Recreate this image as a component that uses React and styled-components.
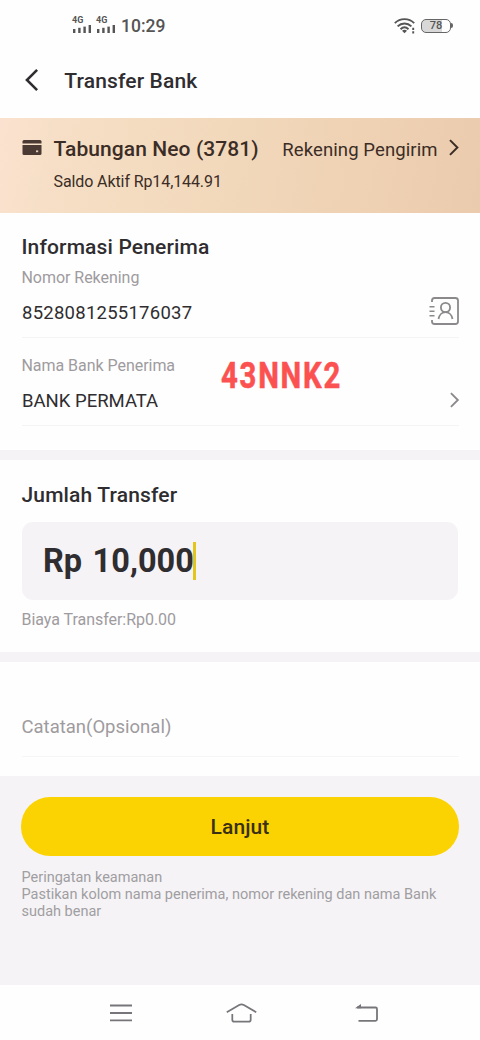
import React from 'react';
import styled, { createGlobalStyle } from 'styled-components';

const GlobalStyle = createGlobalStyle`
  * {
    box-sizing: border-box;
  }
  body {
    margin: 0;
    background-color: #fefefe;
    color: #2f2d30;
    font-family: Roboto, "Liberation Sans", sans-serif;
  }
  svg {
    display: block;
    flex: none;
    overflow: visible;
  }
`;

const Styles = {
  Screen: styled.div`
    display: flex;
    flex-direction: column;
    height: 1040px;
    overflow: hidden;
    position: relative;
    width: 480px;
  `,
  StatusBar: styled.div`
    align-items: center;
    color: #555;
    display: flex;
    height: 52px;
    justify-content: space-between;
    padding: 0 29px 0 72px;
  `,
  StatusGroup: styled.div`
    align-items: center;
    display: flex;
    gap: ${props => props.gap}px;
  `,
  Signal: styled.div`
    display: flex;
    flex-direction: column;
    font-size: 9px;
    font-weight: 700;
    line-height: 9px;
    margin-top: -3px;
    width: 20px;
  `,
  Clock: styled.span`
    font-size: 17.5px;
    font-weight: 500;
    line-height: 22px;
    margin-left: 1px;
  `,
  Battery: styled.div`
    align-items: center;
    background: linear-gradient(90deg, #d8d8d8 72%, #fefefe 72%);
    border: 1.5px solid #666;
    border-radius: 5px;
    display: flex;
    font-size: 11px;
    font-weight: 500;
    height: 14px;
    justify-content: center;
    line-height: 12px;
    position: relative;
    width: 30px;
    &::after {
      background-color: #666;
      border-radius: 0 2px 2px 0;
      content: '';
      height: 5px;
      position: absolute;
      right: -3px;
      top: 3px;
      width: 2px;
    }
  `,
  Header: styled.div`
    align-items: center;
    display: flex;
    height: 65.5px;
    padding: 0 22px 10px 24.5px;
    gap: 27px;
  `,
  PageTitle: styled.span`
    font-size: 21px;
    font-weight: 500;
    letter-spacing: .15px;
    line-height: 26px;
    padding-top: 2px;
  `,
  Account: styled.div`
    background: linear-gradient(100deg, #fbe2d0 0%, #f6dfc6 12%, #f2d9bc 45%, #efd1b3 75%, #ebcbad 100%);
    color: #3b2d26;
    height: 95px;
    padding: 16px 21px 0 22px;
  `,
  AccountRow: styled.div`
    align-items: center;
    display: flex;
    height: 30px;
    svg {
      margin-bottom: 3px;
    }
  `,
  AccountName: styled.span`
    flex: 1;
    font-size: 21px;
    font-weight: 500;
    letter-spacing: .08px;
    margin-left: 11.5px;
    white-space: nowrap;
  `,
  AccountRole: styled.span`
    font-size: 18.5px;
    letter-spacing: .1px;
    margin-right: 11.5px;
    padding-top: 3px;
    white-space: nowrap;
  `,
  Balance: styled.div`
    font-size: 16px;
    letter-spacing: -.1px;
    line-height: 20px;
    margin: 8px 0 0 31.5px;
  `,
  Section: styled.div`
    background-color: #fefefe;
    height: ${props => props.height}px;
    padding: ${props => props.top}px 21px 0 22px;
  `,
  Gap: styled.div`
    background-color: #f5f3f6;
    height: ${props => props.height}px;
  `,
  SectionTitle: styled.div`
    font-size: 21px;
    font-weight: 500;
    letter-spacing: .15px;
    line-height: 26px;
    margin-left: -.5px;
  `,
  Label: styled.div`
    color: #9e9b9f;
    font-size: 16px;
    letter-spacing: -.04px;
    line-height: 20px;
    margin-left: -.5px;
    margin-top: ${props => props.top}px;
  `,
  Field: styled.div`
    align-items: center;
    border-bottom: 1px solid #f4f4f5;
    display: flex;
    font-size: 18.5px;
    height: 50px;
    justify-content: space-between;
    letter-spacing: ${props => props.spacing || 0}px;
    svg {
      margin-bottom: ${props => props.lift || 0}px;
    }
  `,
  AmountBox: styled.div`
    align-items: center;
    background-color: #f5f3f6;
    border-radius: 11px;
    display: flex;
    font-size: 32.5px;
    font-weight: 700;
    height: 78px;
    margin-top: 14px;
    padding-left: 21px;
    width: 436px;
  `,
  Currency: styled.span`
    margin-right: 10.5px;
  `,
  Caret: styled.span`
    background-color: #e3c51b;
    height: 38px;
    margin-left: -1px;
    width: 3px;
  `,
  Note: styled.div`
    border-bottom: 1px solid #f6f6f7;
    color: #9e9b9f;
    font-size: 18.5px;
    height: 43px;
    line-height: 26px;
    margin-left: -.5px;
  `,
  Footer: styled.div`
    background-color: #f5f3f6;
    flex: 1;
    padding: 21px 21px 0;
  `,
  Submit: styled.button`
    background-color: #fbd303;
    border: 0;
    border-radius: 29px;
    color: #3a3012;
    display: block;
    font: 500 21px/26px Roboto, "Liberation Sans", sans-serif;
    height: 59px;
    letter-spacing: .1px;
    padding: 0;
    width: 438px;
  `,
  Warning: styled.div`
    color: #a09ea1;
    font-size: 14.5px;
    line-height: 17px;
    margin-top: 13px;
    padding-left: .5px;
    white-space: pre-line;
  `,
  NavBar: styled.div`
    align-items: center;
    display: flex;
    gap: 94px;
    height: 55px;
    padding: 1px 0 0 109.5px;
    svg:last-child {
      margin-left: 4px;
    }
  `,
  Stamp: styled.div`
    -webkit-text-stroke: .6px #fb5150;
    color: #fb5150;
    font-size: 37.5px;
    font-weight: 700;
    left: 220.5px;
    letter-spacing: 2.3px;
    line-height: 44px;
    position: absolute;
    top: 353px;
    transform: scaleX(.78);
    transform-origin: 0 50%;
  `
};

const SignalBars = () => (
  <Styles.Signal>
    4G
    <svg width="20" height="8" viewBox="0 0 20 8" fill="#555">
      <rect x="1" y="4" width="2.4" height="4" />
      <rect x="6.2" y="2.8" width="2.4" height="5.2" />
      <rect x="11.4" y="1.6" width="2.4" height="6.4" />
      <rect x="16.6" y="0" width="2.4" height="8" />
    </svg>
  </Styles.Signal>
);

const Wifi = () => (
  <svg width="22" height="16" viewBox="0 0 22 16" fill="none" stroke="#555" strokeWidth="1.9">
    <path d="M.8 5.2C6.2-.2 14.8-.2 20.2 5.2" />
    <path d="M3.6 8.4c3.9-3.8 9.9-3.8 13.8 0" />
    <path d="M6.5 11.2c2.4-2.2 5.6-2.2 8 0" />
    <path d="M8 12.7c1.5-1.4 3.5-1.4 5 0l-2.5 2.5z" fill="#555" stroke="none" />
    <path d="M19.2 9.8v2.2M19.2 13.2v2.2" />
  </svg>
);

const Chevron = ({ color, size = 17, left }) => (
  <svg width={size * .58} height={size} viewBox="0 0 10 17" fill="none" stroke={color} strokeWidth="2">
    <path d={left ? 'M9.5 .5 1.5 8.5 9.5 16.5' : 'M1 1l7.5 7.5L1 16'} />
  </svg>
);

const CardIcon = () => (
  <svg width="20" height="15" viewBox="0 0 20 15" fill="#4b3934">
    <path d="M2 0h16Q19.5 0 19.5 1.5V3.5H.5V1.5Q.5 0 2 0Z" />
    <path d="M.5 5h19v8.5q0 1.5-1.5 1.5H2Q.5 15 .5 13.5Z" />
    <path d="M14 11.3h2.200" stroke="#e4cdb7" strokeWidth="1.8" />
  </svg>
);

const ContactIcon = () => (
  <svg width="30" height="28" viewBox="0 0 30 28" fill="none" stroke="#8c898d" strokeWidth="1.8">
    <path d="M3 5V3.5Q3 1 5.5 1h20.8Q29 1 29 3.5v21q0 2.5-2.7 2.5H5.5Q3 27 3 24.5V23" />
    <path d="M.5 9.7h5M.5 14.2h5M.5 18.8h5" strokeWidth="1.6" />
    <circle cx="16.5" cy="10.5" r="4.6" />
    <path d="M9.5 22c.6-4 3.6-6.8 7-6.8s6.4 2.8 7 6.8" />
  </svg>
);

const App = () => (
  <Styles.Screen>
    <GlobalStyle />
    <Styles.StatusBar>
      <Styles.StatusGroup gap={4}>
        <SignalBars />
        <SignalBars />
        <Styles.Clock>10:29</Styles.Clock>
      </Styles.StatusGroup>
      <Styles.StatusGroup gap={5}>
        <Wifi />
        <Styles.Battery>78</Styles.Battery>
      </Styles.StatusGroup>
    </Styles.StatusBar>

    <Styles.Header>
      <Chevron left color="#2f2d30" size={22} />
      <Styles.PageTitle>Transfer Bank</Styles.PageTitle>
    </Styles.Header>

    <Styles.Account>
      <Styles.AccountRow>
        <CardIcon />
        <Styles.AccountName>Tabungan Neo (3781)</Styles.AccountName>
        <Styles.AccountRole>Rekening Pengirim</Styles.AccountRole>
        <Chevron color="#3b2d26" />
      </Styles.AccountRow>
      <Styles.Balance>Saldo Aktif Rp14,144.91</Styles.Balance>
    </Styles.Account>

    <Styles.Section height={237.5} top={21.5}>
      <Styles.SectionTitle>Informasi Penerima</Styles.SectionTitle>
      <Styles.Label top={8}>Nomor Rekening</Styles.Label>
      <Styles.Field spacing={.25} lift={4}>
        8528081255176037
        <ContactIcon />
      </Styles.Field>
      <Styles.Label top={18}>Nama Bank Penerima</Styles.Label>
      <Styles.Field lift={1}>
        BANK PERMATA
        <Chevron color="#8c898d" size={16} />
      </Styles.Field>
    </Styles.Section>
    <Styles.Gap height={10} />

    <Styles.Section height={192} top={22}>
      <Styles.SectionTitle>Jumlah Transfer</Styles.SectionTitle>
      <Styles.AmountBox>
        <Styles.Currency>Rp</Styles.Currency>
        10,000
        <Styles.Caret />
      </Styles.AmountBox>
      <Styles.Label top={10}>Biaya Transfer:Rp0.00</Styles.Label>
    </Styles.Section>
    <Styles.Gap height={10} />

    <Styles.Section height={114} top={52}>
      <Styles.Note>Catatan(Opsional)</Styles.Note>
    </Styles.Section>

    <Styles.Footer>
      <Styles.Submit>Lanjut</Styles.Submit>
      <Styles.Warning>
        {'Peringatan keamanan\nPastikan kolom nama penerima, nomor rekening dan nama Bank\nsudah benar'}
      </Styles.Warning>
    </Styles.Footer>

    <Styles.NavBar>
      <svg width="22" height="18" viewBox="0 0 22 18" stroke="#77757a" strokeWidth="1.8">
        <path d="M0 1.5h22M0 9h22M0 16.3h22" />
      </svg>
      <svg width="31" height="20" viewBox="0 0 32 20" fill="none" stroke="#77757a" strokeWidth="1.8">
        <path d="M.8 9.2 13.6 1.7q2.4-1.2 4.8 0L31.2 9.2" />
        <path d="M6.500 11v6q0 2 2 2h15q2 0 2-2V11" />
      </svg>
      <svg width="23" height="18" viewBox="0 0 23 18" fill="none" stroke="#77757a" strokeWidth="1.8">
        <path d="M2 3.500h18.500q1.500 0 1.500 1.500v10.300q0 1.500-1.500 1.500H3.500" />
        <path d="M0 4.300 6 0v4.300z" fill="#77757a" stroke="none" />
      </svg>
    </Styles.NavBar>

    <Styles.Stamp>43NNK2</Styles.Stamp>
  </Styles.Screen>
);

export default App;
